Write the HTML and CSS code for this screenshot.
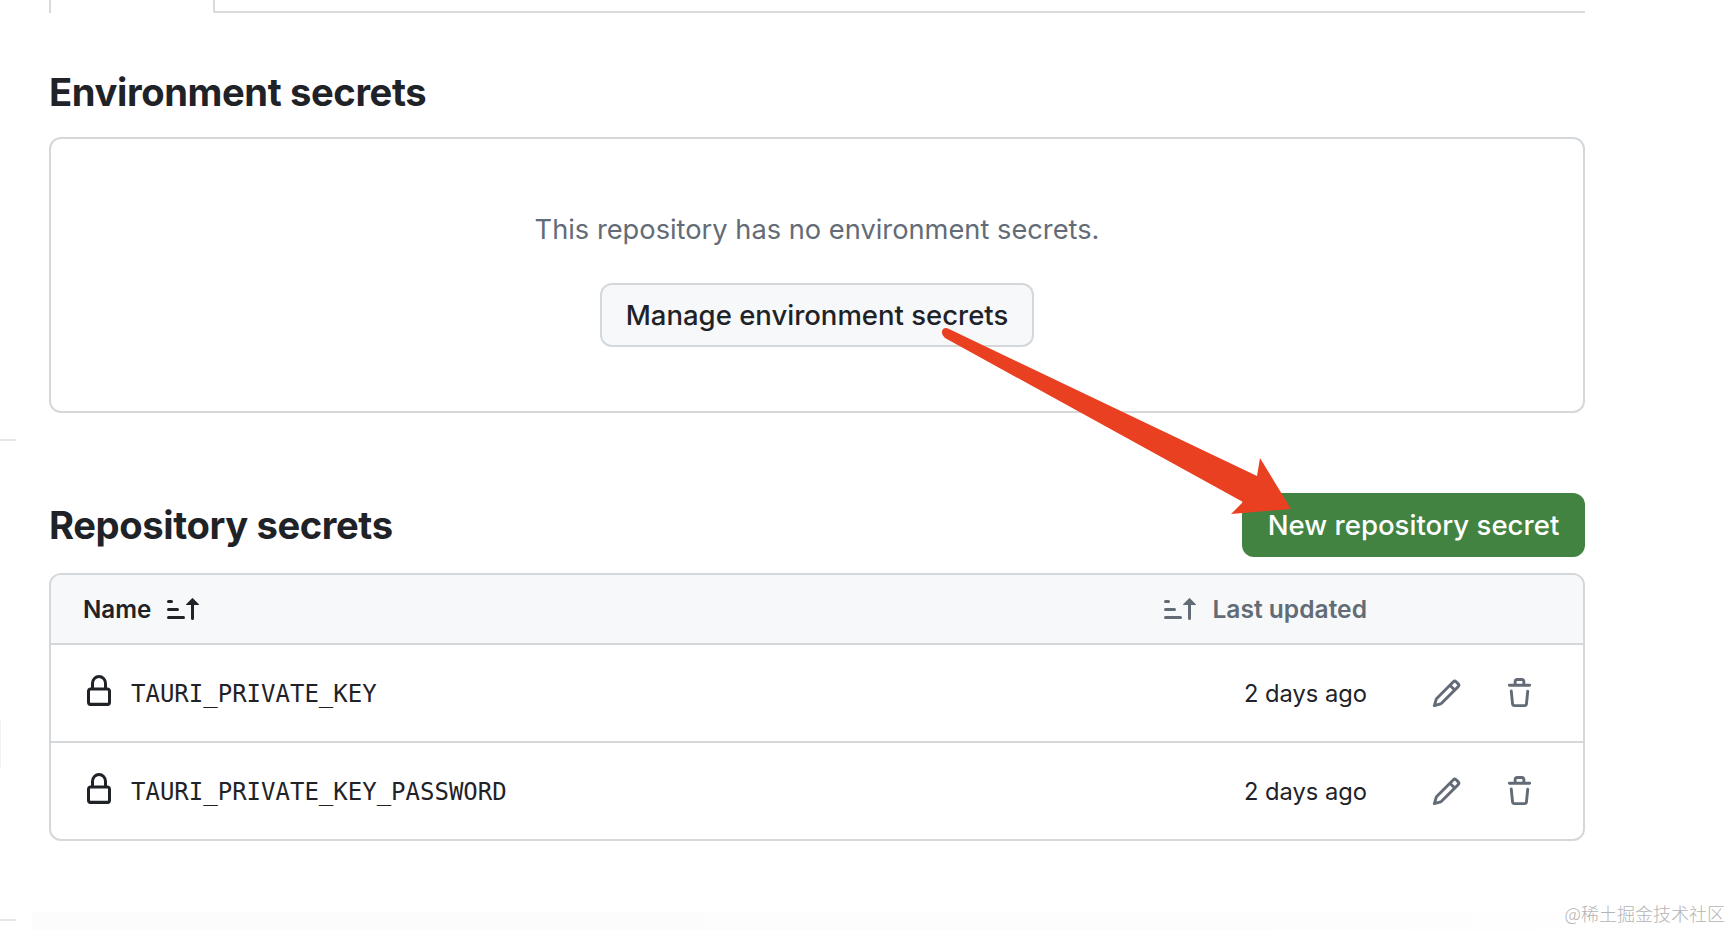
FILE: index.html
```html
<!DOCTYPE html>
<html lang="en">
<head>
<meta charset="utf-8">
<title>Secrets</title>
<link rel="stylesheet" href="styles.css">
</head>
<body>
<svg width="0" height="0" class="defs">
  <symbol id="sort" viewBox="0 0 16 16"><path d="m12.927 2.573 3 3A.25.25 0 0 1 15.75 6H13.5v6.75a.75.75 0 0 1-1.5 0V6H9.75a.25.25 0 0 1-.177-.427l3-3a.25.25 0 0 1 .354 0ZM0 12.25a.75.75 0 0 1 .75-.75h7.5a.75.75 0 0 1 0 1.5H.75a.75.75 0 0 1-.75-.75Zm0-4a.75.75 0 0 1 .75-.75h4.5a.75.75 0 0 1 0 1.5H.75A.75.75 0 0 1 0 8.25Zm0-4a.75.75 0 0 1 .75-.75h1.5a.75.75 0 0 1 0 1.5H.75A.75.75 0 0 1 0 4.25Z"/></symbol>
  <symbol id="lock" viewBox="0 0 16 16" preserveAspectRatio="none"><path d="M4 4a4 4 0 0 1 8 0v2h.25c.966 0 1.75.784 1.75 1.75v5.5A1.75 1.75 0 0 1 12.25 15h-8.5A1.75 1.75 0 0 1 2 13.25v-5.5C2 6.784 2.784 6 3.75 6H4Zm8.25 3.5h-8.5a.25.25 0 0 0-.25.25v5.5c0 .138.112.25.25.25h8.5a.25.25 0 0 0 .25-.25v-5.5a.25.25 0 0 0-.25-.25ZM10.5 6V4a2.5 2.5 0 1 0-5 0v2Z"/></symbol>
  <symbol id="pencil" viewBox="0 0 16 16"><path d="M11.013 1.427a1.75 1.75 0 0 1 2.474 0l1.086 1.086a1.75 1.75 0 0 1 0 2.474l-8.61 8.61c-.21.21-.47.364-.756.445l-3.251.93a.75.75 0 0 1-.927-.928l.929-3.25c.081-.286.235-.547.445-.758l8.61-8.61Zm.176 4.823L9.75 4.81l-6.286 6.287a.253.253 0 0 0-.064.108l-.558 1.953 1.953-.558a.253.253 0 0 0 .108-.064Zm1.238-3.763a.25.25 0 0 0-.354 0L10.811 3.75l1.439 1.44 1.263-1.263a.25.25 0 0 0 0-.354Z"/></symbol>
  <symbol id="trash" viewBox="0 0 16 16"><path d="M11 1.75V3h2.25a.75.75 0 0 1 0 1.5H2.75a.75.75 0 0 1 0-1.5H5V1.75C5 .784 5.784 0 6.75 0h2.5C10.216 0 11 .784 11 1.75ZM4.496 6.675l.66 6.6a.25.25 0 0 0 .249.225h5.19a.25.25 0 0 0 .249-.225l.66-6.6a.75.75 0 0 1 1.492.149l-.66 6.6A1.748 1.748 0 0 1 10.595 15h-5.19a1.75 1.75 0 0 1-1.741-1.575l-.66-6.6a.75.75 0 1 1 1.492-.15ZM6.5 1.75V3h3V1.75a.25.25 0 0 0-.25-.25h-2.5a.25.25 0 0 0-.25.25Z"/></symbol>
</svg>

<div class="page">
  <div class="tabs">
    <div class="tab-active"></div>
    <div class="tab-rest"></div>
  </div>

  <h2 class="title title-env">Environment secrets</h2>
  <section class="blank">
    <p class="blank-text">This repository has no environment secrets.</p>
    <button class="btn" type="button">Manage environment secrets</button>
  </section>

  <div class="repo-head">
    <h2 class="title">Repository secrets</h2>
    <button class="btn-primary" type="button">New repository secret</button>
  </div>

  <div class="table">
    <div class="thead">
      <div class="th-name">Name <svg class="ico-sort"><use href="#sort"/></svg></div>
      <div class="th-updated"><svg class="ico-sort"><use href="#sort"/></svg> Last updated</div>
      <div class="actions-spacer"></div>
    </div>
    <div class="row">
      <svg class="ico-lock"><use href="#lock"/></svg>
      <code class="secret">TAURI_PRIVATE_KEY</code>
      <span class="date">2 days ago</span>
      <div class="actions">
        <svg class="ico-act"><use href="#pencil"/></svg>
        <svg class="ico-act"><use href="#trash"/></svg>
      </div>
    </div>
    <div class="row">
      <svg class="ico-lock"><use href="#lock"/></svg>
      <code class="secret">TAURI_PRIVATE_KEY_PASSWORD</code>
      <span class="date">2 days ago</span>
      <div class="actions">
        <svg class="ico-act"><use href="#pencil"/></svg>
        <svg class="ico-act"><use href="#trash"/></svg>
      </div>
    </div>
  </div>
</div>

<svg class="arrow" viewBox="0 0 1730 930" width="1730" height="930">
  <path d="M943 329 Q946 327 949 329 L1257 476 L1260 458 L1291 509 L1231 514 L1243 502 L945 338 Q940 334 943 329 Z"/>
</svg>
<div class="edge edge-a"></div>
<div class="edge edge-b"></div>
<div class="edge edge-c"></div>
<div class="foot-strip"></div>
<div class="watermark">@稀土掘金技术社区</div>
</body>
</html>
```

FILE: styles.css
```css
* { box-sizing: border-box; }
html, body { margin: 0; height: 100%; }
body {
  position: relative;
  width: 1730px;
  height: 930px;
  overflow: hidden;
  background: #fff;
  color: #1f2328;
  font-family: Inter, "Liberation Sans", sans-serif;
}
.defs { position: absolute; }
svg { fill: currentColor; }

.page { width: 1585px; padding-left: 49px; }

.tabs { display: flex; height: 13px; }
.tab-active { width: 164px; border-left: 2px solid #d8dadd; }
.tab-rest { flex: 1; border-left: 2px solid #d8dadd; border-bottom: 2px solid #d8dadd; border-bottom-left-radius: 2px; }

.title { margin: 0; font-size: 38.2px; line-height: 44px; font-weight: 700; letter-spacing: -0.4px; color: #1f2328; }
.title-env { margin-top: 57px; }

.blank {
  margin-top: 23px;
  height: 276px;
  border: 2px solid #d5d8db;
  border-radius: 12px;
  display: flex;
  flex-direction: column;
  align-items: center;
  padding-top: 73px;
}
.blank-text { margin: 0; font-size: 27.25px; line-height: 36px; color: #636c76; }
.btn {
  margin-top: 35px;
  width: 434px;
  height: 64px;
  border: 2px solid #d5d8db;
  border-radius: 12px;
  background: #f6f8fa;
  color: #1f2328;
  font: 500 27.5px/36px Inter, "Liberation Sans", sans-serif;
  padding: 0;
}

.repo-head { margin-top: 80px; height: 64px; display: flex; align-items: center; justify-content: space-between; }
.btn-primary {
  width: 343px;
  height: 64px;
  border: 0;
  border-radius: 12px;
  background: #428342;
  color: #fff;
  font: 500 27.6px/36px Inter, "Liberation Sans", sans-serif;
  padding: 0;
}

.table {
  margin-top: 16px;
  height: 268px;
  border: 2px solid #d5d8db;
  border-radius: 12px;
  overflow: hidden;
}
.thead {
  height: 70px;
  background: #f6f8fa;
  border-bottom: 2px solid #d5d8db;
  display: flex;
  align-items: center;
  padding-left: 32px;
  font-size: 24.2px;
  font-weight: 600;
}
.th-name { flex: 1; display: flex; align-items: center; gap: 16px; }
.th-updated { display: flex; align-items: center; gap: 16px; color: #636c76; font-size: 24.6px; }
.actions-spacer { width: 216px; }
.ico-sort { width: 32px; height: 32px; }

.row {
  height: 98px;
  display: flex;
  align-items: center;
  padding-left: 32px;
  border-bottom: 2px solid #d5d8db;
}
.row:last-child { height: 96px; border-bottom: 0; }
.ico-lock { width: 32px; height: 33px; flex: none; margin-bottom: 4px; }
.secret {
  flex: 1;
  margin-left: 16px;
  padding-top: 2px;
  font-family: "DejaVu Sans Mono", "Liberation Mono", monospace;
  font-size: 24px;
}
.date { font-size: 23.7px; color: #1f2328; }
.actions { width: 216px; display: flex; align-items: center; gap: 42px; padding-left: 64px; color: #636c76; }
.ico-act { width: 31px; height: 31px; flex: none; }

.arrow { position: absolute; left: 0; top: 0; fill: #ea4022; pointer-events: none; }

.edge { position: absolute; left: 0; background: #e6e7e8; }
.edge-a { top: 439px; width: 16px; height: 2px; }
.edge-b { top: 720px; width: 1px; height: 48px; background: #f2f2f2; }
.edge-c { top: 919px; width: 16px; height: 2px; }
.foot-strip { position: absolute; left: 32px; right: 0; bottom: 0; height: 18px; background: linear-gradient(90deg, #fcfcfc, #fdfdfd 80%, #fff); }
.watermark {
  position: absolute;
  right: 5px;
  top: 902px;
  font-family: "Noto Sans CJK SC", "Noto Sans", sans-serif;
  font-weight: 300;
  font-size: 18px;
  line-height: 22px;
  color: #b4b4b4;
}
```
